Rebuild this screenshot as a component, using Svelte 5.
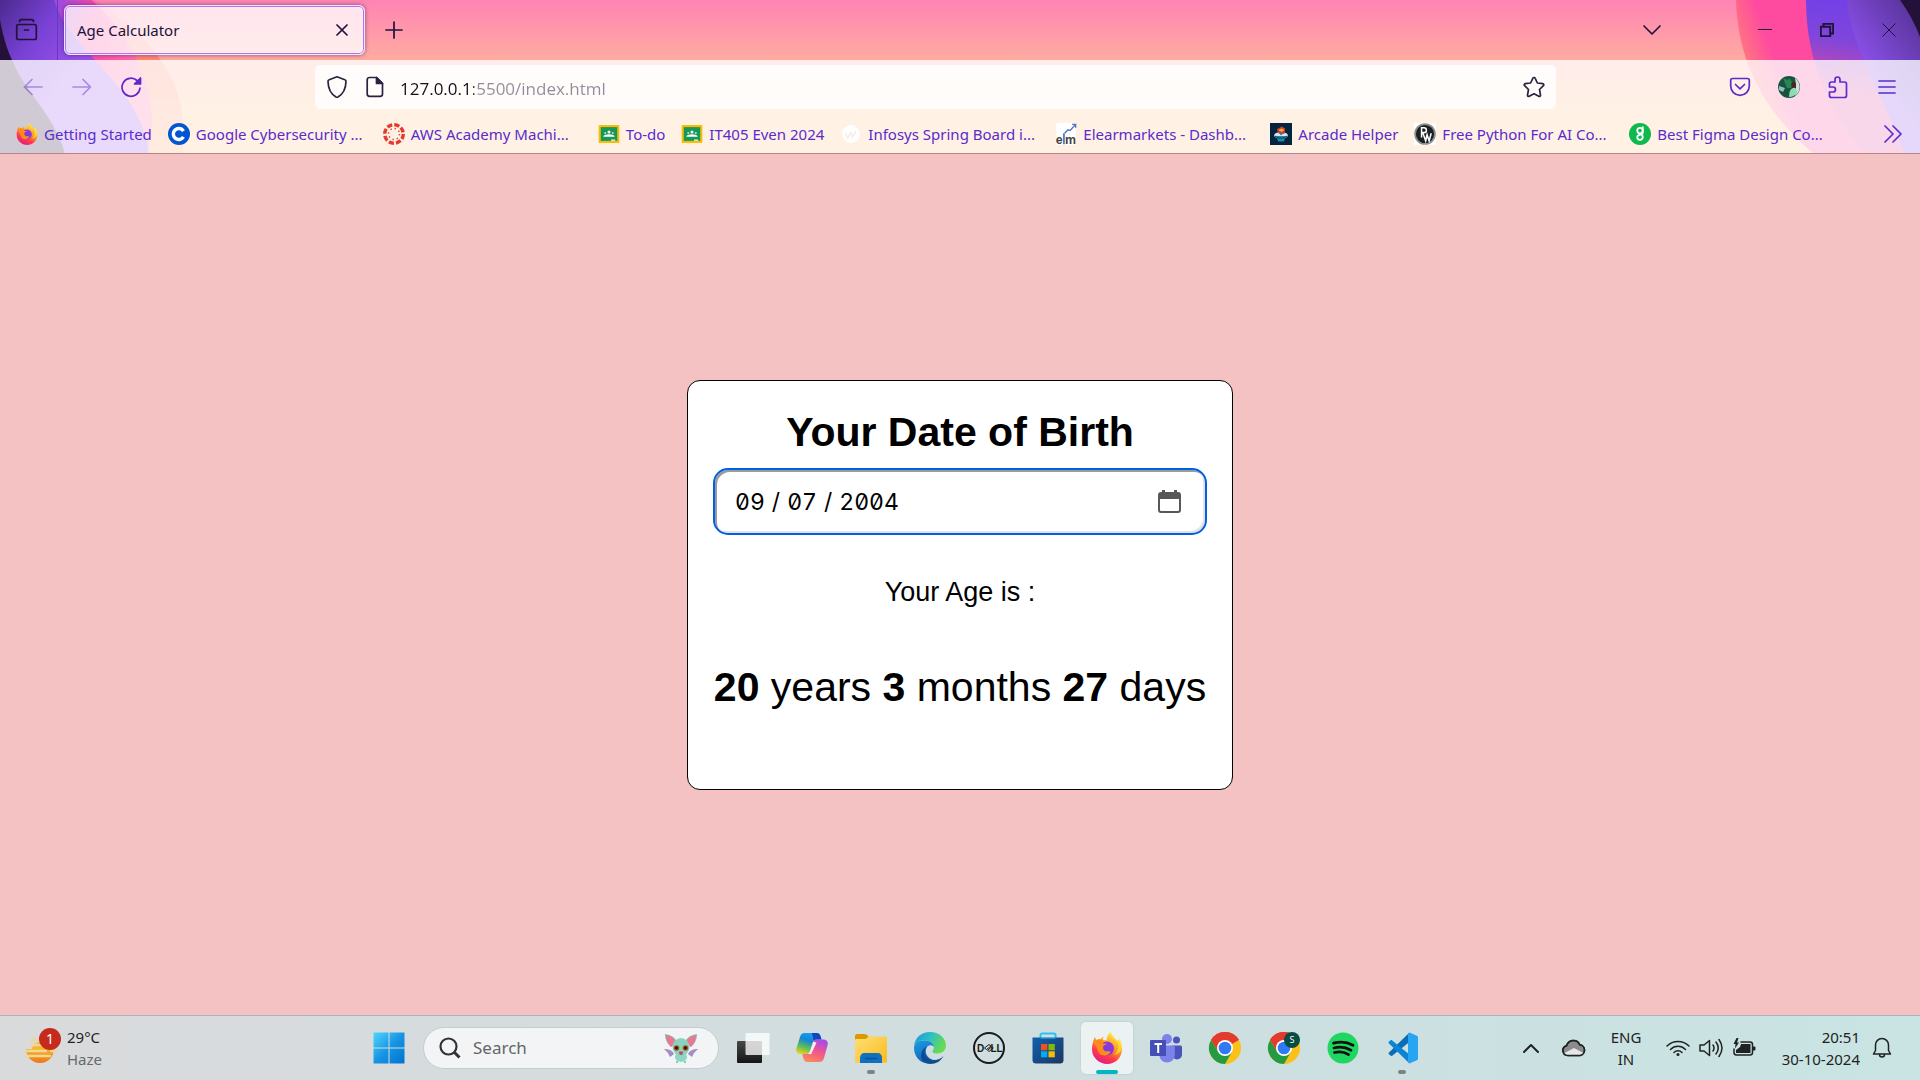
<script>
  const bookmarks = [
    { icon: 'firefox', label: 'Getting Started' },
    { icon: 'coursera', label: 'Google Cybersecurity ...', long: true },
    { icon: 'canvas', label: 'AWS Academy Machi...', long: true },
    { icon: 'classroom', label: 'To-do' },
    { icon: 'classroom', label: 'IT405 Even 2024' },
    { icon: 'infosys', label: 'Infosys Spring Board i...', long: true },
    { icon: 'elm', label: 'Elearmarkets - Dashb...', long: true },
    { icon: 'arcade', label: 'Arcade Helper' },
    { icon: 'pw', label: 'Free Python For AI Co...', long: true },
    { icon: 'figma', label: 'Best Figma Design Co...', long: true }
  ];

  const apps = [
    { icon: 'taskview', name: 'Task View' },
    { icon: 'copilot', name: 'Copilot' },
    { icon: 'folder', name: 'File Explorer', state: 'running' },
    { icon: 'edge', name: 'Microsoft Edge' },
    { icon: 'dell', name: 'Dell' },
    { icon: 'store', name: 'Microsoft Store' },
    { icon: 'firefox', name: 'Firefox', state: 'active' },
    { icon: 'teams', name: 'Microsoft Teams' },
    { icon: 'chrome', name: 'Google Chrome' },
    { icon: 'chromeS', name: 'Google Chrome, profile S' },
    { icon: 'spotify', name: 'Spotify' },
    { icon: 'vscode', name: 'Visual Studio Code', state: 'running' }
  ];

  let birthDate = $state('2004-09-07');
  let url = $state('127.0.0.1:5500/index.html');
  let query = $state('');
  const age = { years: 20, months: 3, days: 27 };
</script>

{#snippet chromeLogo()}
  <circle cx="16" cy="16" r="16" fill="#fbc116" />
  <path d="M16 16 2.100 8A16 16 0 0 1 29.900 8z" fill="#e33b2e" />
  <path d="M16 8h13.900A16 16 0 0 0 2.100 8L9.100 20z" fill="#e33b2e" />
  <path d="M2.100 8A16 16 0 0 0 16 32l6.900-12-6.900 4-6.900-4z" fill="#249a41" />
  <circle cx="16" cy="16" r="8" fill="#fff" />
  <circle cx="16" cy="16" r="6.300" fill="#2f7af0" />
{/snippet}

{#snippet art(name)}
  <svg class="art" viewBox="0 0 32 32" aria-hidden="true">
    {#if name === 'firefox'}
      <path d="M2 10.500c.2-2 1.100-4.300 2.200-5.500.2 1.300.5 2 1.100 2.900C6.500 7 8 6.800 9.500 7c1-1.200 2-2 3.200-2.400-.8 1.400-.8 2.300-.4 3.400l3.200.3c.2-3.300 1.500-6 4-8.300.2 3 2.200 4.600 4.700 6.700 1.400 1.200 1.600 2.300 1.900 3.300.4-.8.4-1.700.3-2.500 3 2.600 4.600 5.700 4.600 9.500C31 25.500 24.500 32 16.300 32S1 25.500 1 17.500c0-2.500.2-4.900 1-7z" fill="url(#ff-body)" />
      <path d="M19.500 0c.2 3 2.200 4.600 4.700 6.700 5.400 4.700 3.700 12.800-1.200 16 6.800-.5 10.400-7.700 5.900-15.500L27 7.500l-1 1.500z" fill="#ffe23c" opacity=".75" />
      <circle cx="16" cy="16.500" r="7" fill="url(#ff-globe)" />
      <path d="M2 10.500C5.500 7.500 9.500 7 13 9.200c-1.500.3-2 1-2 2l4.500.6c0 1.300-2.700 1.500-3.200 2.400-.4 1.500-.2 3.300 1 4.300 1.700 1.500 4.300.3 6.200.9-.8 3.800-7 5.600-10.400 2.700C6 19.500 7 14 2 10.500z" fill="#ff8a1c" />
    {:else if name === 'coursera'}
      <circle cx="16" cy="16" r="16" fill="#0056d2" />
      <path d="M22.500 11.800A8 8 0 1 0 22.500 20.200" fill="none" stroke="#fff" stroke-width="5" />
    {:else if name === 'canvas'}
      <circle cx="16" cy="16" r="13.500" fill="none" stroke="#e4392b" stroke-width="5" stroke-dasharray="7.600 3" />
      <circle cx="16" cy="16" r="8" fill="none" stroke="#e4392b" stroke-width="2" stroke-dasharray="2 4.280" />
    {:else if name === 'classroom'}
      <rect x="1" y="3" width="30" height="26" rx="1" fill="#fbbc04" />
      <rect x="4" y="6" width="24" height="20" fill="#149959" />
      <circle cx="16" cy="13" r="2.200" fill="#fff" />
      <circle cx="10.500" cy="14.500" r="1.500" fill="#b6dfca" />
      <circle cx="21.500" cy="14.500" r="1.500" fill="#b6dfca" />
      <path d="M8 19c1.500-2 4-1.500 8-2.500 4 1 6.500.5 8 2.500v1H8z" fill="#fff" />
      <path d="M19 26h6v-2h-6z" fill="#eee" />
    {:else if name === 'infosys'}
      <circle cx="16" cy="16" r="13" fill="#fff" />
      <path d="m8 14 3 8 5-8 2 7 5-9" fill="none" stroke="#f3ece6" stroke-width="2" />
    {:else if name === 'elm'}
      <path d="M2 0h28v32H2z" fill="#fff" />
      <text x="1" y="31" class="elm">e</text>
      <path d="M13 31V15" stroke="#4b74b9" stroke-width="2.500" />
      <text x="14.500" y="31" class="elm">m</text>
      <path d="m14 15 5-5 3 1 8-9m-5 0h5v5" fill="none" stroke="#4b74b9" stroke-width="2" />
    {:else if name === 'arcade'}
      <rect width="32" height="32" fill="#03243f" />
      <ellipse cx="16" cy="18" rx="10" ry="5" fill="#d4e9ee" />
      <path d="M9 19h14l-3 8h-8z" fill="#138db0" />
      <path d="M10 9 17 5l5 3-1 8-9-1z" fill="#d8392c" />
      <path d="m12 10 5-2 4 2-4 3z" fill="#f4ab27" />
      <path d="m13 14 6 1-3 3z" fill="#2b6fb8" />
      <path d="M7 18q9 7 18 0v2q-9 6-18 0z" fill="#1d3656" />
    {:else if name === 'pw'}
      <rect width="32" height="32" fill="#fff" />
      <circle cx="16" cy="16" r="14.500" fill="#1b2022" stroke="#8b8f90" stroke-width="2.500" />
      <path d="M11 21V7h3.500a3.300 3.300 0 0 1 0 7H11m2 1 4 11 2-9 3 9 3-11" fill="none" stroke="#fff" stroke-width="2.200" />
    {:else if name === 'figma'}
      <circle cx="16" cy="16" r="16" fill="#10b94e" />
      <circle cx="16" cy="11" r="4" fill="none" stroke="#fff" stroke-width="2.600" />
      <path d="M20 5v9c0 4-8 2-8 6.500a4 4 0 1 0 4-4" fill="none" stroke="#fff" stroke-width="2.600" />
    {:else if name === 'taskview'}
      <rect x="0" y="9" width="25" height="22" rx="1" fill="url(#tv-dark)" />
      <rect x="8.500" y="1" width="24" height="22" rx="1" fill="#fff" opacity=".78" />
    {:else if name === 'copilot'}
      <path d="M8.500 1h12c2.500 0 3.500 1.300 4.300 4l.7 2.500h-5c-2 0-3 1-3.600 3l-2.700 8.500c-.7 2.300-2 3-4 3H5c-4 0-5.500-2.500-4.500-6L4 5c.8-2.500 2-4 4.500-4z" fill="url(#cp-a)" />
      <path d="M16 1h4.500c2.500 0 3.500 1.300 4.300 4l.7 2.500h-5c-1.300 0-2.200.5-2.800 1.500z" fill="#1743c1" />
      <path d="M23.500 30h-12c-2.500 0-3.500-1.300-4.300-4l-.9-4h4.200c2 0 3-1 3.600-3l2.700-8.500c.7-2.300 2-3 4-3H27c4 0 5.500 2.500 4.500 6L28 26c-.8 2.500-2 4-4.500 4z" fill="url(#cp-b)" />
      <path d="m17.300 9.500 3.200 1.200-5.500 11.500-3.500-.5c1.300-.3 2-1.200 2.500-2.700z" fill="#f4f1f2" />
    {:else if name === 'folder'}
      <path d="M0 4.500C0 3 .8 2 2.300 2h7.200c1 0 1.600.2 2.200.8L14 5v5H0z" fill="#dd9700" />
      <path d="M0 8.500c0-1 .6-1.500 1.500-1.500h9L14 4.500h16.500c1 0 1.500.6 1.500 1.500v23.500c0 .8-.5 1.200-1.500 1.200h-29C.5 30.700 0 30.200 0 29.500z" fill="url(#fd)" />
      <path d="M5 31v-5c0-3 1.500-5 4.500-5h13c3 0 4.500 2 4.500 5v5z" fill="#0f70c0" />
      <path d="M10 26.500h12" stroke="#0a4f98" stroke-width="1.500" />
    {:else if name === 'edge'}
      <path d="M0 14C1 5.500 7.500 0 16 0c9 0 16 6 16 13.500 0 5-4 8-9 8-3.500 0-5-1.300-4.300-2.700 1-1.500 1.300-2.300 1.300-3.800 0-3.500-4-6.500-9-6.500-5 0-9 2-11 5.500z" fill="url(#eg-top)" />
      <path d="M0 15C1 10.500 5.500 8.500 11 8.500c5 0 9 3 9 6.500-2-2.700-7-2.500-8 2.500-1.200 6.500 5 11.500 10.500 10.500C20 31 16 32 13 31.500 5 30.500-.5 23 0 15z" fill="url(#eg-mid)" />
      <path d="M12.800 14.500C8 20 12 28 20 28c4 0 7-1.500 9.500-4C27 29 22 32 16.500 32 9 31.500 6 26.500 7.500 21c.8-3 2.800-5.500 5.300-6.500z" fill="#104b91" />
    {:else if name === 'dell'}
      <circle cx="16" cy="16" r="15" fill="none" stroke="#17191a" stroke-width="2" />
      <text x="4" y="19.800" class="dell">D</text>
      <path d="m11.500 16 4.500-3.500 2 1.500-4.500 3.500zm3 2.200 4.500-3.500 1.300 1.200-4.300 3.600z" fill="none" stroke="#17191a" stroke-width="1" />
      <text x="17.500" y="19.800" class="dell">LL</text>
    {:else if name === 'store'}
      <path d="M8.500 7V3.200c0-1 .6-1.700 1.700-1.700h11.600c1 0 1.700.7 1.700 1.700V7" fill="none" stroke="#2dc0f5" stroke-width="2" />
      <path d="M.5 5.500h31V28a3.500 3.500 0 0 1-3.500 3.500H4A3.500 3.500 0 0 1 .5 28z" fill="url(#st)" />
      <path d="M8.500 5.500h15V6.500h-15z" fill="#2dc0f5" />
      <path d="M9 12h6.300v6.300H9z" fill="#f1511b" /><path d="M16.500 12h6.300v6.300h-6.300z" fill="#80bc06" />
      <path d="M9 19.300h6.300v6H9z" fill="#00adef" /><path d="M16.500 19.300h6.300v6h-6.300z" fill="#fbbc09" />
    {:else if name === 'teams'}
      <circle cx="26.500" cy="8" r="3.500" fill="#4b53bc" />
      <path d="M22 13.500h8.500c.8 0 1.500.6 1.500 1.500v7.500a5 5 0 0 1-8.500 3.500z" fill="#4b53bc" />
      <circle cx="17" cy="7" r="5" fill="#7b83eb" />
      <path d="M10.500 13.500h13c.8 0 1.300.6 1.300 1.300v8a7.700 7.700 0 0 1-15.500 0z" fill="#7b83eb" />
      <rect x="0" y="8" width="16" height="16" rx="1" fill="#464eb8" />
      <path d="M4.500 12h7.500M8.200 12v9" stroke="#fff" stroke-width="2" />
    {:else if name === 'chrome'}
      {@render chromeLogo()}
    {:else if name === 'chromeS'}
      {@render chromeLogo()}
      <circle cx="24" cy="8" r="8" fill="#064d42" />
      <text x="24" y="11.300" text-anchor="middle" class="profile">S</text>
    {:else if name === 'spotify'}
      <circle cx="16" cy="16" r="15.500" fill="#1ed760" />
      <path d="M6.500 11.200q10.500-3 19.500 2M7 16q9-2.500 17 2.200M7.500 20.500q7.500-2 14 2" fill="none" stroke="#111" stroke-width="2.800" stroke-linecap="round" />
    {:else if name === 'vscode'}
      <path d="M23.500.5 3 20.500c-.6.600-.6 1.300 0 1.800l1.500 1.300c.6.500 1.200.5 1.700.1L24 9.500z" fill="#0b6db7" />
      <path d="M4.400 8.400 3 9.600c-.6.500-.6 1.300 0 1.800l20.500 20L24 23 6.200 8.400c-.5-.4-1.200-.4-1.800 0z" fill="#0c84d4" />
      <path d="M23.500.5 31 3.800c.6.300 1 .9 1 1.600v21.200c0 .7-.4 1.300-1 1.600l-7.500 3.400L22 30V2z" fill="#27a5f2" />
    {/if}
  </svg>
{/snippet}

<svg class="defs" aria-hidden="true">
  <defs>
    <linearGradient id="ff-body" x1=".8" y1="0" x2=".3" y2="1"><stop offset=".1" stop-color="#ffe440" /><stop offset=".45" stop-color="#ff9a20" /><stop offset=".72" stop-color="#ff3a4a" /><stop offset="1" stop-color="#e3168a" /></linearGradient>
    <linearGradient id="ff-globe" x1="0" y1="1" x2="1" y2="0"><stop offset="0" stop-color="#4d49dc" /><stop offset="1" stop-color="#a82fe0" /></linearGradient>
    <linearGradient id="tv-dark" x1="0" y1="0" x2="0" y2="1"><stop offset="0" stop-color="#484848" /><stop offset="1" stop-color="#151515" /></linearGradient>
    <linearGradient id="cp-a" x1=".6" y1="0" x2=".2" y2="1"><stop offset="0" stop-color="#16a0f0" /><stop offset=".35" stop-color="#1387d8" /><stop offset=".7" stop-color="#67c04e" /><stop offset="1" stop-color="#e8d320" /></linearGradient>
    <linearGradient id="cp-b" x1=".7" y1="0" x2=".3" y2="1"><stop offset="0" stop-color="#a44bea" /><stop offset=".5" stop-color="#f0568e" /><stop offset="1" stop-color="#fb8a5b" /></linearGradient>
    <linearGradient id="fd" x1="0" y1="0" x2="1" y2="1"><stop offset="0" stop-color="#ffdf77" /><stop offset="1" stop-color="#fbbb1b" /></linearGradient>
    <linearGradient id="eg-top" x1="0" y1="0" x2="1" y2=".4"><stop offset="0" stop-color="#1c91d8" /><stop offset=".5" stop-color="#2bbfc9" /><stop offset="1" stop-color="#66dc51" /></linearGradient>
    <linearGradient id="eg-mid" x1="0" y1="0" x2=".4" y2="1"><stop offset="0" stop-color="#1b9de2" /><stop offset="1" stop-color="#1263bd" /></linearGradient>
    <linearGradient id="st" x1="0" y1="0" x2="1" y2="1"><stop offset="0" stop-color="#0d62ad" /><stop offset="1" stop-color="#203563" /></linearGradient>
    <linearGradient id="win" x1="0" y1="0" x2="1" y2="1"><stop offset="0" stop-color="#50d6ff" /><stop offset=".5" stop-color="#1795e3" /><stop offset="1" stop-color="#0073d0" /></linearGradient>
    <linearGradient id="sun" x1="0" y1="0" x2="0" y2="1"><stop offset="0" stop-color="#f5b52c" /><stop offset="1" stop-color="#ef7518" /></linearGradient>
    <linearGradient id="violet-l" gradientUnits="userSpaceOnUse" x1="0" y1="0" x2="80" y2="60"><stop offset="0" stop-color="#4b2a8e" /><stop offset=".5" stop-color="#7841d4" /><stop offset="1" stop-color="#9a52ea" /></linearGradient>
    <linearGradient id="pink-l" gradientUnits="userSpaceOnUse" x1="60" y1="0" x2="150" y2="20"><stop offset="0" stop-color="#a04ae0" /><stop offset=".4" stop-color="#ff47a4" /><stop offset="1" stop-color="#ff70aa" /></linearGradient>
    <linearGradient id="peach-l" x1="0" y1="0" x2="0" y2="1"><stop offset="0" stop-color="#ff79b0" /><stop offset=".4" stop-color="#ff8874" /><stop offset="1" stop-color="#ffa770" /></linearGradient>
    <linearGradient id="pink-r" gradientUnits="userSpaceOnUse" x1="34" y1="50" x2="90" y2="30"><stop offset="0" stop-color="#ff8078" /><stop offset=".6" stop-color="#ff4b9f" /><stop offset="1" stop-color="#ff4b9f" /></linearGradient>
    <linearGradient id="violet-r" gradientUnits="userSpaceOnUse" x1="120" y1="0" x2="105" y2="90"><stop offset="0" stop-color="#7440e6" /><stop offset=".4" stop-color="#8046db" /><stop offset="1" stop-color="#e5489f" /></linearGradient>
    <linearGradient id="violet-r2" gradientUnits="userSpaceOnUse" x1="160" y1="60" x2="215" y2="20"><stop offset="0" stop-color="#8c50ea" /><stop offset="1" stop-color="#5c36a0" /></linearGradient>
  </defs>
</svg>

<div class="desktop">
  <header class="browser">
    <svg class="theme left" viewBox="0 0 200 154" aria-hidden="true">
      <path d="M0 0h96c44 30 86 70 87 125v29H0z" fill="url(#peach-l)" />
      <path d="M0 0h92c30 28 60 70 60 125l-4 29H0z" fill="url(#pink-l)" />
      <path d="M0 0h54c10 32 34 50 54 75 21 24 37 46 41 79H0z" fill="url(#violet-l)" />
      <path d="M0 20c4 22 9 34 16 49 10 20 32 44 41 64 4 8 6 14 8 21H0z" fill="#241139" />
    </svg>
    <svg class="theme right" viewBox="0 0 220 154" aria-hidden="true">
      <path d="M36 0c2 70 35 118 78 154h106V0z" fill="url(#pink-r)" />
      <path d="M106 0c0 62 24 116 60 154h54V0z" fill="url(#violet-r)" />
      <path d="M147 0c5 50 36 96 58 154h15V0z" fill="url(#violet-r2)" />
      <path d="M200 0q13 18 20 37V0z" fill="#241139" />
    </svg>

    <div class="tabs">
      <button class="library" aria-label="Recent browsing">
        <svg width="24" height="24" viewBox="0 0 24 24"><path d="M4.500 3.500c0-1.300.8-1.800 1.800-1.800h10.400c1 0 1.800.5 1.800 1.800M3.500 6.500h16c1 0 1.800.8 1.800 1.800v11.400c0 1-.8 1.800-1.800 1.800h-16c-1 0-1.800-.8-1.800-1.800V8.300c0-1 .8-1.800 1.800-1.800zM9.500 12h4" /></svg>
      </button>
      <div class="tab">
        <span>Age Calculator</span>
        <button class="close-tab" aria-label="Close tab"><svg width="12" height="12" viewBox="0 0 12 12"><path d="m1 1 10 10M11 1 1 11" /></svg></button>
      </div>
      <button class="new-tab" aria-label="New tab"><svg width="18" height="18" viewBox="0 0 18 18"><path d="M9 1v16M1 9h16" /></svg></button>
      <button class="list-tabs" aria-label="List all tabs"><svg width="18" height="10" viewBox="0 0 18 10"><path d="m1 1 8 8 8-8" /></svg></button>
      <div class="window">
        <button aria-label="Minimize"><svg width="14" height="14" viewBox="0 0 14 14"><path d="M0 6.500h14" /></svg></button>
        <button aria-label="Restore"><svg class="restore" width="14" height="14" viewBox="0 0 14 14"><path d="M.8 3.800h9.400v9.400H.8zM3.500 3V.8h9.700v9.700H11" /></svg></button>
        <button aria-label="Close"><svg width="14" height="14" viewBox="0 0 14 14"><path d="m.5.5 13 13m0-13-13 13" /></svg></button>
      </div>
    </div>

    <div class="chrome">
      <div class="toolbar">
        <div class="nav">
          <button class="dim" aria-label="Back"><svg width="20" height="18" viewBox="0 0 20 18"><path d="M19 9H1.500M9 1.500 1.500 9 9 16.500" /></svg></button>
          <button class="dim" aria-label="Forward"><svg width="20" height="18" viewBox="0 0 20 18"><path d="M1 9h17.500M11 1.500 18.500 9 11 16.500" /></svg></button>
          <button aria-label="Reload"><svg width="22" height="22" viewBox="0 0 22 22"><path d="M20 12a9 9 0 1 1-3-7.500" /><path d="M20.500 2v6h-6z" fill="currentColor" /></svg></button>
        </div>
        <div class="urlbar">
          <button aria-label="Tracking protection"><svg width="22" height="24" viewBox="0 0 22 24"><path d="m11 1.800 7.800 3c.8.300 1.300 1 1.200 1.800C19.800 13.500 17.500 19 12 22c-.6.300-1.400.3-2 0C4.500 19 2.200 13.500 2 6.600c-.1-.8.400-1.500 1.200-1.800z" /></svg></button>
          <button aria-label="Site information"><svg width="18" height="22" viewBox="0 0 18 22"><path d="M3.500 1.500h7l6 6V18a2.300 2.300 0 0 1-2.300 2.300H3.500A2.300 2.300 0 0 1 1.200 18V3.800a2.300 2.300 0 0 1 2.300-2.300z" /><path d="M10.500 1.500v6h6z" fill="currentColor" /></svg></button>
          <input class="url" type="text" aria-label="Address" bind:value={url} />
          <button class="star" aria-label="Bookmark this page"><svg width="22" height="22" viewBox="0 0 22 22"><path d="M11 1.500c.6 0 1 .3 1.200.8L14.400 7l5.300.7c1.100.2 1.400 1.300.7 2L16.500 13.500l1 5.600c.1 1-.8 1.700-1.700 1.200L11 17.800l-4.800 2.500c-.9.500-1.800-.2-1.700-1.200l1-5.600L1.600 9.700c-.7-.7-.4-1.800.7-2L7.600 7l2.200-4.700c.2-.5.6-.8 1.200-.8z" /></svg></button>
        </div>
        <div class="tools">
          <button aria-label="Save to Pocket"><svg width="22" height="20" viewBox="0 0 22 20"><path d="M3.500 1.500h15c1 0 1.800.8 1.800 1.800V9a9.300 9.300 0 0 1-18.600 0V3.300c0-1 .8-1.800 1.800-1.800z" /><path d="m6.500 7.500 4.500 4.300 4.500-4.300" /></svg></button>
          <button aria-label="Account">
            <svg class="avatar" width="22" height="22" viewBox="0 0 22 22"><circle cx="11" cy="11" r="11" fill="#155540" /><path d="M17 2a11 11 0 0 1 0 18q2-9 0-18z" fill="#d8ddd8" /><path d="M5 2q5 3 6 1t3 4-5 5z" fill="#2a8550" /><path d="M13 8q3-4 5 0v4h-4z" fill="#4a2521" /><path d="M11 21q0-8 4-9t4 5q-3 4-8 4z" fill="#8fdcb4" /><path d="m1 10 6 2-2 4-4-2z" fill="#9bbdba" /></svg>
          </button>
          <button aria-label="Extensions"><svg width="20" height="24" viewBox="0 0 20 24"><path d="M3.500 7H7V4.500a2.500 2.500 0 0 1 5 0V7h4.500c1.200 0 2 .8 2 2v11.500c0 1.200-.8 2-2 2h-13c-1.200 0-2-.8-2-2V17H5a2.500 2.500 0 0 0 0-5H1.500V9c0-1.200.8-2 2-2z" /></svg></button>
          <button aria-label="Menu"><svg width="18" height="16" viewBox="0 0 18 16"><path d="M1 2h16M1 8h16M1 14h16" /></svg></button>
        </div>
      </div>
      <nav class="bookmarks" aria-label="Bookmarks">
        {#each bookmarks as b}
          <a href="#bookmark" class:long={b.long}>{@render art(b.icon)}<span>{b.label}</span></a>
        {/each}
        <button class="more" aria-label="More bookmarks"><svg width="20" height="18" viewBox="0 0 20 18"><path d="m2 1 8 8-8 8M10 1l8 8-8 8" /></svg></button>
      </nav>
    </div>
  </header>

  <main>
    <section class="card">
      <h1><label for="dob">Your Date of Birth</label></h1>
      <div class="field">
        <input id="dob" type="date" bind:value={birthDate} />
        <svg width="23" height="23" viewBox="0 0 23 23" aria-hidden="true"><path d="M4 0h3v2h9V0h3v2h1a3 3 0 0 1 3 3v15a3 3 0 0 1-3 3H3a3 3 0 0 1-3-3V5a3 3 0 0 1 3-3h1zM2 9v11a1 1 0 0 0 1 1h17a1 1 0 0 0 1-1V9z" fill="#585858" fill-rule="evenodd" /></svg>
      </div>
      <p class="caption">Your Age is :</p>
      <p class="result"><b>{age.years}</b> years <b>{age.months}</b> months <b>{age.days}</b> days</p>
    </section>
  </main>

  <footer class="taskbar">
    <button class="weather">
      <svg width="40" height="40" viewBox="0 0 40 40" aria-hidden="true"><path d="M4 21h28a14 14 0 0 1-28 0z" fill="url(#sun)" /><path d="M10 21q0-6 8-7h10q4 3 4 8z" fill="#f5b52c" /><path d="M9 12h8M10 17h14M4 23h20M29 23h5M4 28h24M11 28h15" stroke="#f0d792" stroke-width="2.500" stroke-linecap="round" /><circle cx="28" cy="11" r="11" fill="#c42b1c" /><text x="28" y="16" text-anchor="middle">1</text></svg>
      <span class="stack"><span>29°C</span><span class="muted">Haze</span></span>
    </button>
    <div class="apps">
      <button class="app" aria-label="Start"><svg width="32" height="32" viewBox="0 0 32 32"><path d="M.5.500h15v15H.5zm16 0h15v15h-15zm-16 16h15v15H.5zm16 0h15v15h-15z" fill="url(#win)" /></svg></button>
      <label class="search">
        <svg width="22" height="22" viewBox="0 0 22 22" aria-hidden="true"><circle cx="9.500" cy="9.500" r="8" fill="none" stroke="#333" stroke-width="2.200" /><path d="m15 15 5.500 5.500" stroke="#333" stroke-width="3" /></svg>
        <input type="text" placeholder="Search" aria-label="Search" bind:value={query} />
        <svg width="34" height="30" viewBox="0 0 34 30" aria-hidden="true">
          <path d="M0 16q8 0 10 5l-4 3q-2-5-6-8zM34 16q-8 0-10 5l4 3q2-5 6-8z" fill="#a58bc8" />
          <path d="M1 1q9 1 12 8l-6 5Q1 9 1 1zM33 1q-9 1-12 8l6 5q6-5 6-13z" fill="#7ebfae" />
          <path d="M2 2q8 1 10 8l-5 4Q2 9 2 2zM32 2q-8 1-10 8l5 4q5-5 5-12z" fill="#ec7793" />
          <ellipse cx="17" cy="24" rx="6" ry="5" fill="#8fd6c4" /><path d="M13 28v2M21 28v2" stroke="#6da" stroke-width="2" />
          <ellipse cx="17" cy="14" rx="8.500" ry="9" fill="#8ad3bf" />
          <circle cx="12.500" cy="15" r="2.800" fill="#a8501a" /><circle cx="21.500" cy="15" r="2.800" fill="#a8501a" /><circle cx="12.500" cy="15" r="1.400" fill="#1d0f0c" /><circle cx="21.500" cy="15" r="1.400" fill="#1d0f0c" />
          <path d="M15 18.500h4q0 3.500-2 3.500t-2-3.500z" fill="#c04a55" />
        </svg>
      </label>
      {#each apps as app}
        <button class="app {app.state ?? ''}" aria-label={app.name}>{@render art(app.icon)}</button>
      {/each}
    </div>
    <div class="tray">
      <button aria-label="Show hidden icons"><svg width="16" height="10" viewBox="0 0 16 10"><path d="m1 9 7-7 7 7" stroke-width="2" /></svg></button>
      <button class="cloud" aria-label="OneDrive"><svg width="24" height="18" viewBox="0 0 24 18"><path d="M6 16.500a5 5 0 0 1-1.500-9.800C5.500 3.500 8 1.500 11.500 1.500c3 0 5.300 1.700 6.200 4.300a5.400 5.400 0 0 1 .3 10.700z" fill="#8b8b8b" /><path d="m2.500 14 9.500-5 9.500 5q-1.500 2-3.500 2H6q-2 0-3.500-2z" fill="#e6e6e6" stroke="none" /><path d="M6 16.500a5 5 0 0 1-1.500-9.800C5.500 3.500 8 1.500 11.500 1.500c3 0 5.300 1.700 6.200 4.300a5.400 5.400 0 0 1 .3 10.700z" /></svg></button>
      <button class="lang"><span>ENG</span><span>IN</span></button>
      <button class="status" aria-label="Network, sound and battery">
        <svg width="24" height="18" viewBox="0 0 24 18"><path d="M1 7a15.500 15.500 0 0 1 22 0M4.500 10.500a10.500 10.500 0 0 1 15 0M8 13.500a5.700 5.700 0 0 1 8 0" /><circle cx="12" cy="15.500" r="1.500" fill="currentColor" stroke="none" /></svg>
        <svg width="24" height="20" viewBox="0 0 24 20"><path d="M1 7v6h4l5.500 4.500v-15L5 7zM14 7q2 3 0 6M17 4q4.500 6 0 12M20 1.500q6 8.500 0 17" /></svg>
        <svg width="24" height="20" viewBox="0 0 24 20"><path d="M9 4h9a2.500 2.500 0 0 1 2.500 2.500v8A2.500 2.500 0 0 1 18 17H4.500A2.500 2.500 0 0 1 2 14.500V11" /><path d="M9 6h9.500v9H4v-3l4-3zM21 8.500h1.500q1 0 1 1v2q0 1-1 1H21zM4.500 0 1.500 6h2L3 10.500 7 4.500H5L6.500 0z" fill="currentColor" stroke="none" /></svg>
      </button>
      <button class="clock"><span>20:51</span><span>30-10-2024</span></button>
      <button aria-label="Notifications"><svg width="20" height="22" viewBox="0 0 20 22"><path d="M10 1.500a6.500 6.500 0 0 0-6.500 6.500v5.500L1.500 17h17l-2-3.500V8A6.500 6.500 0 0 0 10 1.500zM7.500 17.500a2.500 2.500 0 0 0 5 0" /></svg></button>
    </div>
  </footer>
</div>

<style>
  :global(body) {
    margin: 0;
  }
  .desktop {
    display: flex;
    flex-direction: column;
    min-height: 100vh;
    font: 15px/22px 'Noto Sans', 'Open Sans', sans-serif;
    background: #f4c2c2;
  }
  .desktop * {
    box-sizing: border-box;
  }
  .defs {
    position: absolute;
    width: 0;
    height: 0;
  }
  button {
    display: flex;
    align-items: center;
    justify-content: center;
    padding: 0;
    border: 0;
    background: none;
    color: inherit;
    font: inherit;
  }
  svg {
    display: block;
    flex: none;
  }
  .art {
    width: 22px;
    height: 22px;
    overflow: visible;
  }

  /* Browser frame */
  .browser {
    position: relative;
    overflow: hidden;
    color: #20123a;
    background: linear-gradient(#ff84b4, #ffaba0 60px, #ffc084 110px);
    border-bottom: 1px solid #b98582;
  }
  .browser button svg,
  .tray svg {
    fill: none;
    stroke: currentColor;
    stroke-width: 1.700;
    stroke-linejoin: round;
    stroke-linecap: round;
  }
  .theme {
    position: absolute;
    top: 0;
    height: 154px;
  }
  .theme.left {
    left: 0;
  }
  .theme.right {
    right: 0;
  }
  .tabs {
    position: relative;
    display: flex;
    align-items: center;
    height: 60px;
  }
  .library {
    width: 58px;
    height: 60px;
    padding-right: 4px;
    border-right: 1px solid #6b38bd;
  }
  .tab {
    display: flex;
    align-items: center;
    justify-content: space-between;
    width: 301px;
    height: 50px;
    margin-left: 6px;
    padding: 0 8px 0 12px;
    border: 1px solid #f3e4ff;
    border-radius: 6px;
    background: rgba(255, 255, 255, 0.78);
    box-shadow: inset 0 0 0 1px #a778f5, 0 0 4px rgba(60, 20, 80, 0.6);
  }
  .close-tab {
    width: 28px;
    height: 28px;
  }
  .new-tab {
    width: 48px;
    height: 48px;
    margin-left: 5px;
  }
  .list-tabs {
    width: 48px;
    height: 48px;
    margin-left: auto;
  }
  .window {
    display: flex;
    margin-left: 58px;
  }
  .window button {
    width: 62px;
    height: 60px;
  }
  .browser .window svg {
    stroke-width: 1;
    stroke-linecap: butt;
  }
  .browser .window .restore {
    stroke-width: 2;
    stroke-linejoin: miter;
  }
  .chrome {
    position: relative;
    color: #5b2bcb;
    background: rgba(255, 255, 255, 0.78);
  }
  .toolbar {
    display: flex;
    align-items: center;
    height: 54px;
  }
  .nav,
  .tools {
    display: flex;
    gap: 1px;
    padding: 0 9px;
  }
  .nav {
    width: 315px;
  }
  .tools {
    width: 364px;
    justify-content: flex-end;
  }
  .nav button,
  .tools button {
    width: 48px;
    height: 44px;
  }
  .nav .dim {
    opacity: 0.45;
  }
  .browser .avatar {
    stroke: none;
  }
  .urlbar {
    display: flex;
    flex: 1;
    align-items: center;
    min-width: 0;
    height: 44px;
    padding: 0 3px;
    border-radius: 5px;
    background: rgba(255, 255, 255, 0.8);
    color: #2b2140;
  }
  .urlbar button {
    width: 38px;
    height: 38px;
  }
  .url {
    flex: 1;
    min-width: 0;
    height: 32px;
    margin-left: 6px;
    padding: 2px 0 0;
    border: 0;
    outline: 0;
    font: 17px/30px 'Open Sans', 'Noto Sans', sans-serif;
    color: transparent;
    /* Host in ink, port and path in grey */
    background: linear-gradient(90deg, #15101f 74px, #918b9b 74px);
    background-clip: text;
  }
  .bookmarks {
    display: flex;
    align-items: center;
    gap: 16px;
    height: 39px;
    padding: 0 14px 0 16px;
  }
  .bookmarks a {
    display: flex;
    flex: none;
    align-items: center;
    gap: 6px;
    color: inherit;
    text-decoration: none;
    white-space: nowrap;
  }
  .bookmarks .long {
    width: 199px;
  }
  .more {
    width: 26px;
    height: 30px;
    margin-left: auto;
  }
  .elm {
    font: bold 18px 'Liberation Sans', sans-serif;
    fill: #444;
  }
  .dell {
    font: bold 10px 'Liberation Sans', sans-serif;
    fill: #17191a;
  }
  .profile {
    font: 9px 'Open Sans', sans-serif;
    fill: #fff;
  }

  /* Page */
  main {
    display: flex;
    flex: 1;
    align-items: center;
    justify-content: center;
    font-family: 'Liberation Sans', Arial, sans-serif;
    color: #000;
  }
  .card {
    width: 546px;
    padding: 27px 25px 78px;
    border: 1px solid #000;
    border-radius: 13px;
    background: #fff;
    text-align: center;
  }
  h1 {
    margin: 0 0 12px;
    font-size: 41px;
    line-height: 48px;
  }
  .field {
    position: relative;
  }
  .field input {
    display: block;
    width: 100%;
    height: 67px;
    padding: 2px 22px 0 19px;
    border: 2px solid #0060df;
    border-radius: 15px;
    outline: 0;
    background: #fff;
    box-shadow: inset 2px 2px 0 #9b9b9b, inset -2px -2px 0 #e3e3e3;
    color: #000;
    font: 23px/30px Inter, 'DejaVu Sans Mono', monospace;
    font-feature-settings: 'tnum', 'zero';
  }
  .field input::-webkit-datetime-edit-text {
    padding: 0 6px;
  }
  .field input::-webkit-calendar-picker-indicator {
    opacity: 0;
  }
  .field svg {
    position: absolute;
    top: 22px;
    right: 26px;
    pointer-events: none;
  }
  .caption {
    margin: 41px 0 55px;
    font-size: 27px;
    line-height: 32px;
  }
  .result {
    margin: 0;
    font-size: 41px;
    line-height: 48px;
    white-space: nowrap;
  }

  /* Taskbar */
  .taskbar {
    display: flex;
    align-items: center;
    height: 65px;
    border-top: 1px solid #a9b3b8;
    background: linear-gradient(90deg, #d9dadc, #d5dcde 28%, #cddfe0 65%, #c9e4e3);
    color: #1f2324;
  }
  .weather {
    width: 363px;
    gap: 5px;
    padding-left: 22px;
    justify-content: flex-start;
    text-align: left;
  }
  .weather text {
    font-size: 14px;
    fill: #fff;
  }
  .stack,
  .lang,
  .clock {
    display: flex;
    flex-direction: column;
  }
  .muted {
    color: #66696b;
  }
  .apps {
    display: flex;
    align-items: center;
    gap: 7px;
  }
  .app {
    position: relative;
    width: 52px;
    height: 52px;
    border-radius: 5px;
  }
  .app .art {
    width: 32px;
    height: 32px;
  }
  .app.active {
    background: rgba(255, 255, 255, 0.6);
    box-shadow: 0 0 2px rgba(0, 0, 0, 0.15);
  }
  .app.running::after,
  .app.active::after {
    content: '';
    position: absolute;
    bottom: 0;
    width: 8px;
    height: 4px;
    border-radius: 2px;
    background: #7d8284;
  }
  .app.active::after {
    width: 22px;
    background: #00b7c3;
  }
  .search {
    display: flex;
    align-items: center;
    width: 296px;
    height: 42px;
    margin: 0 1px;
    padding: 0 20px 0 15px;
    border: 1px solid #c5cccf;
    border-radius: 21px;
    background: #f2f4f6;
  }
  .search input {
    flex: 1;
    min-width: 0;
    margin-left: 12px;
    padding: 0;
    border: 0;
    outline: 0;
    background: none;
    font: 17px/24px 'Noto Sans', 'Open Sans', sans-serif;
  }
  .search input::placeholder {
    color: #636669;
    opacity: 1;
  }
  .tray {
    display: flex;
    align-items: center;
    gap: 12px;
    margin-left: auto;
    padding-right: 28px;
  }
  .tray svg {
    stroke-width: 1.500;
  }
  .cloud {
    margin-left: 11px;
  }
  .lang {
    width: 56px;
  }
  .status {
    gap: 9px;
  }
  .clock {
    width: 92px;
    align-items: flex-end;
  }
</style>
